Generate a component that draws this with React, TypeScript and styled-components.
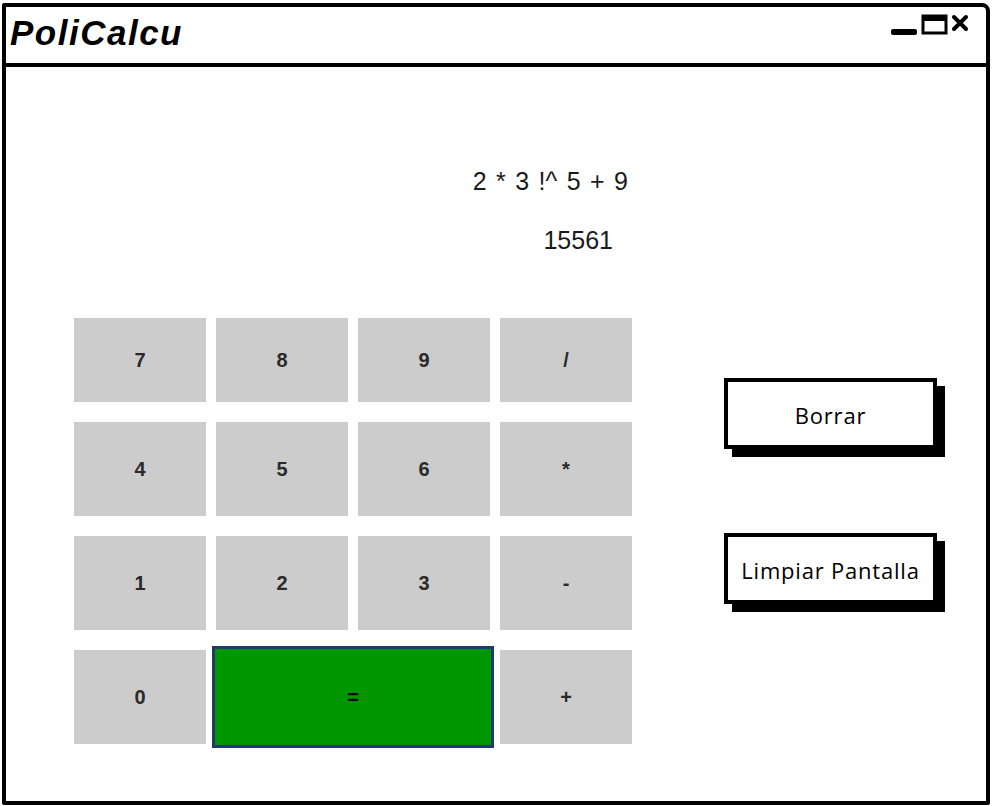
import React from "react";
import styled, { createGlobalStyle } from "styled-components";

const Global = createGlobalStyle`
  html, body { margin: 0; padding: 0; background: #fff; }
  body { width: 992px; height: 806px; overflow: hidden; }
`;

const Window = styled.div`
  box-sizing: border-box;
  width: 988px;
  height: 802px;
  margin: 3px 0 0 2px;
  border: 4px solid #000;
  border-radius: 2px 8px 2px 2px;
  display: flex;
  flex-direction: column;
  background: #fff;
`;

const TitleBar = styled.div`
  height: 56px;
  flex: none;
  border-bottom: 4px solid #000;
  display: flex;
  align-items: center;
  justify-content: space-between;
  padding: 0 15px 0 4px;
`;

const Title = styled.h1`
  margin: 0;
  font-family: "Liberation Sans", Arial, sans-serif;
  font-weight: 700;
  font-style: italic;
  font-size: 35px;
  color: #000;
  letter-spacing: 1.5px;
  padding-bottom: 4px;
`;

const Controls = styled.div`
  display: flex;
  align-items: flex-start;
  margin-top: -18px;
`;

const Body = styled.div`
  flex: 1;
  display: flex;
  padding-left: 68px;
`;

const LeftColumn = styled.div`
  width: 558px;
  display: flex;
  flex-direction: column;
`;

const Display = styled.div`
  height: 251px;
  display: flex;
  flex-direction: column;
  align-items: flex-end;
  font-family: "Liberation Sans", Arial, sans-serif;
  color: #1a1a1a;
`;

const DisplayLine = styled.div<{ $top: number; $right: number }>`
  margin-top: ${(p) => p.$top}px;
  margin-right: ${(p) => p.$right}px;
  font-size: 25px;
  line-height: 30px;
  word-spacing: 2.5px;
`;

const Keypad = styled.div`
  display: grid;
  grid-template-columns: repeat(4, 132px);
  grid-template-rows: 84px 94px 94px 94px;
  column-gap: 10px;
  row-gap: 20px;
`;

const Key = styled.div<{ $wide?: boolean }>`
  display: flex;
  align-items: center;
  justify-content: center;
  background: ${(p) => (p.$wide ? "#009600" : "#cccccc")};
  font-family: "Liberation Sans", Arial, sans-serif;
  font-size: 20px;
  font-weight: 700;
  color: #2a2a2a;
  ${(p) =>
    p.$wide &&
    `
    grid-column: span 2;
    margin: -4px;
    border: 3px solid #203a6a;
    box-sizing: border-box;
    color: #000;
  `}
`;

const SideColumn = styled.div`
  margin-left: 92px;
  padding-top: 311px;
  display: flex;
  flex-direction: column;
  gap: 84px;
`;

const SketchButton = styled.div`
  box-sizing: border-box;
  width: 213px;
  height: 71px;
  border: 4px solid #000;
  box-shadow: 8px 8px 0 #000;
  display: flex;
  align-items: center;
  justify-content: center;
  padding-top: 2px;
  font-family: "Open Sans", "Noto Sans", sans-serif;
  font-size: 22px;
  letter-spacing: 0.8px;
  color: #000;
  background: #fff;
`;

const keys: { label: string; wide?: boolean }[] = [
  { label: "7" }, { label: "8" }, { label: "9" }, { label: "/" },
  { label: "4" }, { label: "5" }, { label: "6" }, { label: "*" },
  { label: "1" }, { label: "2" }, { label: "3" }, { label: "-" },
  { label: "0" }, { label: "=", wide: true }, { label: "+" },
];

export default function App() {
  return (
    <>
      <Global />
      <Window>
        <TitleBar>
          <Title>PoliCalcu</Title>
          <Controls>
            <svg width="80" height="24" viewBox="0 0 80 24">
              <rect x="0" y="15" width="26" height="6" rx="2" fill="#000" />
              <rect x="32" y="2" width="23" height="17" fill="none" stroke="#000" strokeWidth="3" />
              <rect x="32" y="2" width="23" height="5" fill="#000" />
              <path d="M63 3 L75 15 M75 3 L63 15" stroke="#000" strokeWidth="4" strokeLinecap="round" />
            </svg>
          </Controls>
        </TitleBar>
        <Body>
          <LeftColumn>
            <Display>
              <DisplayLine $top={99} $right={4}>2 * 3 !^ 5 + 9</DisplayLine>
              <DisplayLine $top={29} $right={19}>15561</DisplayLine>
            </Display>
            <Keypad>
              {keys.map((k) => (
                <Key key={k.label} $wide={k.wide}>
                  {k.label}
                </Key>
              ))}
            </Keypad>
          </LeftColumn>
          <SideColumn>
            <SketchButton>Borrar</SketchButton>
            <SketchButton>Limpiar Pantalla</SketchButton>
          </SideColumn>
        </Body>
      </Window>
    </>
  );
}
